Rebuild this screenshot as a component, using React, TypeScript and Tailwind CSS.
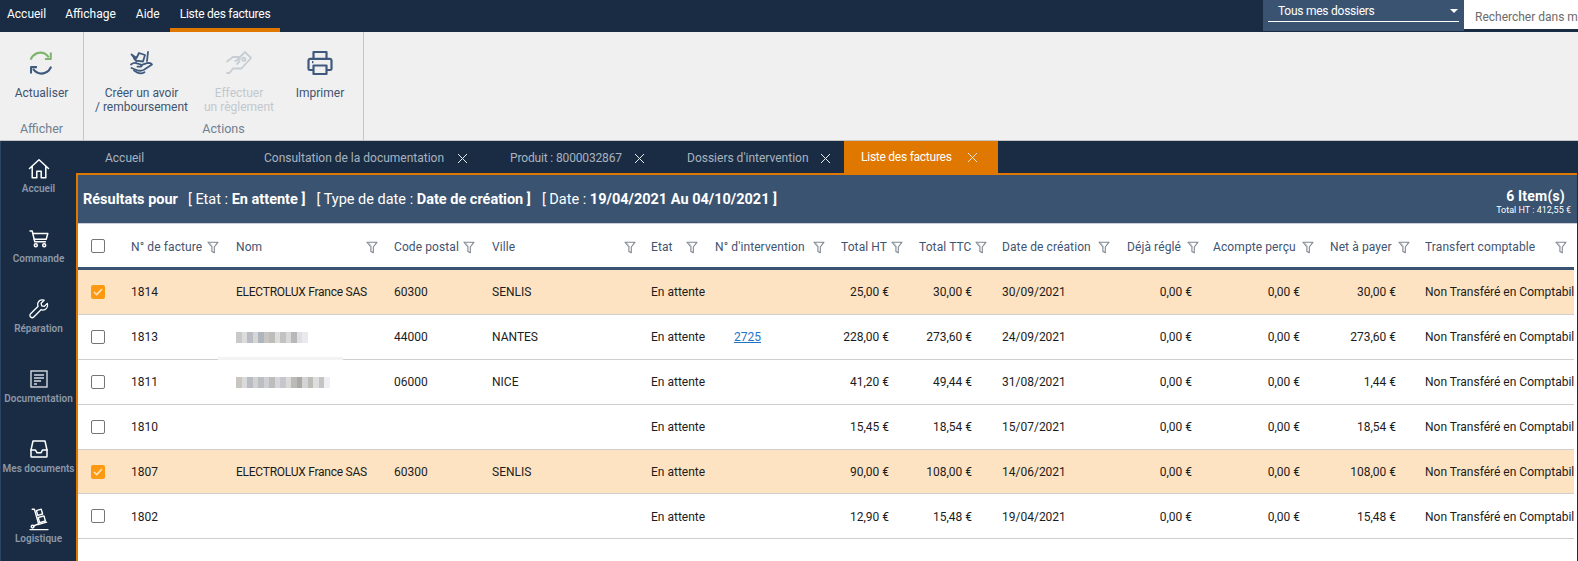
import React from "react";

const GRID = "grid grid-cols-[53px_105px_158px_98px_159px_64px_116px_78px_93px_115px_87px_116px_105px_149px]";

function Filter() {
  return (
    <svg width="12" height="13" viewBox="0 0 12 13" fill="none" stroke="#7f8791" strokeWidth="1.1" className="shrink-0">
      <path d="M1 1.2h10L7.3 6v5.8L4.9 10.4V6z" strokeLinejoin="round" />
      <path d="M2.6 1.8l3 4.2" stroke="#b4b9bf" />
    </svg>
  );
}

function Check({ on }: { on: boolean }) {
  if (on) {
    return (
      <div className="w-[14px] h-[14px] rounded-[2px] bg-[#fd9a12] flex items-center justify-center">
        <svg width="10" height="8" viewBox="0 0 10 8" fill="none" stroke="#fde6c6" strokeWidth="1.5">
          <path d="M1 4l2.7 2.6L9 1" />
        </svg>
      </div>
    );
  }
  return <div className="w-[14px] h-[14px] rounded-[2px] border-[1.5px] border-[#757575] bg-white" />;
}

const headers: { label: string; cls: string }[] = [
  { label: "N° de facture", cls: "pr-[17px]" },
  { label: "Nom", cls: "pr-[16px]" },
  { label: "Code postal", cls: "pr-[17px]" },
  { label: "Ville", cls: "pr-[15px]" },
  { label: "Etat", cls: "pr-[17px]" },
  { label: "N° d'intervention", cls: "pr-[6px]" },
  { label: "Total HT", cls: "pl-[10px] pr-[6px]" },
  { label: "Total TTC", cls: "pl-[10px] pr-[15px]" },
  { label: "Date de création", cls: "pr-[7px]" },
  { label: "Déjà réglé", cls: "pl-[10px] pr-[5px]" },
  { label: "Acompte perçu", cls: "pl-[9px] pr-[6px]" },
  { label: "Net à payer", cls: "pl-[10px] pr-[15px]" },
  { label: "Transfert comptable", cls: "pr-[7px]" },
];

type Row = {
  id: string;
  nom?: string;
  blur?: string[];
  patch?: boolean;
  cp: string;
  ville: string;
  interv?: string;
  ht: string;
  ttc: string;
  date: string;
  net: string;
  on?: boolean;
};

const B1 = ["#c9c9c9", "#dcdcdc", "#b9bcc2", "#d6d6d6", "#aeb6bd", "#c8c5c2", "#bfbdba", "#dedede", "#c2c2c2", "#d9d9d9", "#b8b8b8", "#dfe0e4", "#e9e9ee"];
const B2 = ["#c9c6c2", "#dadada", "#b9bcc2", "#d2d2d2", "#bbbfc4", "#cfcfd4", "#bdbdbd", "#d6d6dc", "#c6c6cc", "#dadada", "#bbbab8", "#aaa9a6", "#d4d4d4", "#bdbdb8", "#dedede", "#c4c4c4", "#f0f0f4"];

const rows: Row[] = [
  { id: "1814", nom: "ELECTROLUX France SAS", cp: "60300", ville: "SENLIS", ht: "25,00 €", ttc: "30,00 €", date: "30/09/2021", net: "30,00 €", on: true },
  { id: "1813", blur: B1, patch: true, cp: "44000", ville: "NANTES", interv: "2725", ht: "228,00 €", ttc: "273,60 €", date: "24/09/2021", net: "273,60 €" },
  { id: "1811", blur: B2, cp: "06000", ville: "NICE", ht: "41,20 €", ttc: "49,44 €", date: "31/08/2021", net: "1,44 €" },
  { id: "1810", cp: "", ville: "", ht: "15,45 €", ttc: "18,54 €", date: "15/07/2021", net: "18,54 €" },
  { id: "1807", nom: "ELECTROLUX France SAS", cp: "60300", ville: "SENLIS", ht: "90,00 €", ttc: "108,00 €", date: "14/06/2021", net: "108,00 €", on: true },
  { id: "1802", cp: "", ville: "", ht: "12,90 €", ttc: "15,48 €", date: "19/04/2021", net: "15,48 €" },
];

const iconProps = { fill: "none", stroke: "#ffffff", strokeWidth: 1.5, strokeLinecap: "round" as const, strokeLinejoin: "round" as const };

const sideItems: { label: string; icon: React.ReactNode }[] = [
  {
    label: "Accueil",
    icon: (
      <svg width="22" height="22" viewBox="0 0 22 22" {...iconProps}>
        <path d="M1.5 10.5L11 1.8l9.5 8.7M4.2 8.5v11.2h4.6v-6.4h4.4v6.4h4.6V8.5" />
      </svg>
    ),
  },
  {
    label: "Commande",
    icon: (
      <svg width="20" height="18" viewBox="0 0 20 18" {...iconProps}>
        <path d="M1 1h2.2l2.6 10.8h10.6" />
        <path d="M3.8 3.6h15l-1.6 5.6H5.2" />
        <circle cx="6.8" cy="15.2" r="1.5" />
        <circle cx="15.2" cy="15.2" r="1.5" />
      </svg>
    ),
  },
  {
    label: "Réparation",
    icon: (
      <svg width="20" height="20" viewBox="0 0 20 20" {...iconProps} strokeWidth={1.3}>
        <path d="M18.3 4.4l-3 3-2.6-.6-.6-2.6 3-3c-2.4-.8-5 .1-6 2.3-.6 1.3-.5 2.7 0 3.8L1.6 14.8c-.9.9-.9 2.4 0 3.2.9.9 2.3.9 3.2 0l7.2-7.3c1.2.5 2.6.5 3.8 0 2.2-1 3.2-3.8 2.5-6.3z" />
      </svg>
    ),
  },
  {
    label: "Documentation",
    icon: (
      <svg width="18" height="18" viewBox="0 0 18 18" fill="none" stroke="#d5d9df" strokeWidth="1.4">
        <rect x="1" y="1" width="16" height="16" />
        <path d="M4 5h10M4 8h10M4 11h7M4 14h3" strokeWidth="1.4" />
      </svg>
    ),
  },
  {
    label: "Mes documents",
    icon: (
      <svg width="18" height="18" viewBox="0 0 18 18" {...iconProps}>
        <path d="M3 1h12l2 9v6.2a.8.8 0 01-.8.8H1.8a.8.8 0 01-.8-.8V10z" />
        <path d="M1 10h4.5l1.5 2.8h4l1.5-2.8H17" />
      </svg>
    ),
  },
  {
    label: "Logistique",
    icon: (
      <svg width="20" height="23" viewBox="0 0 20 23" {...iconProps} strokeWidth={1.4}>
        <path d="M1 21.6h18" />
        <path d="M3.2 1.2h2.2l4.2 14.6L4.4 18" />
        <circle cx="3.6" cy="18.6" r="1.4" />
        <rect x="8" y="1.8" width="5" height="5" transform="rotate(-16 10.5 4.3)" />
        <rect x="9.8" y="8.6" width="6" height="5.4" transform="rotate(-16 12.8 11.3)" />
        <path d="M9 16.6l8.6-2.4" />
      </svg>
    ),
  },
];

function Money({ color }: { color: string }) {
  return (
    <svg width="26" height="26" viewBox="0 0 26 26" fill="none" stroke={color} strokeWidth="1.8" strokeLinecap="round" strokeLinejoin="round">
      <path d="M2.5 4.5l5 3.5 2.5-5 6 2-2 6.5-6.5-.8z" />
      <path d="M5 8.5l2.5 3" />
      <path d="M19 2l-1 9" />
      <path d="M2 14.5c2-1.6 4-2 6-1.2l3.8 1.2c1.4.4 1.2 2.2-.4 2.2H8.5" />
      <path d="M12 15.2l6-2c2-.6 4.5.2 5 1.4l-8 5.2c-2.6 1.4-5 1.2-7.5.2L2.5 18" />
      <path d="M5 20.5l3.5 2.2c2.5 1 5 .8 7-.4" />
    </svg>
  );
}

function Pay({ color }: { color: string }) {
  return (
    <svg width="28" height="26" viewBox="0 0 28 26" fill="none" stroke={color} strokeWidth="1.8" strokeLinecap="round" strokeLinejoin="round">
      <path d="M2 11.5l6-4.5h5.5c1.5 0 2 2 .5 2.6L10 11" />
      <path d="M13 9l7-7 6 6-9.5 10.5H8L4.5 23H2" />
      <circle cx="18.8" cy="9.2" r="1.6" />
      <path d="M12 14l2.5-2.5" />
    </svg>
  );
}

function Printer() {
  return (
    <svg width="26" height="26" viewBox="0 0 26 26" fill="none" stroke="#3f5a7c" strokeWidth="2.2" strokeLinejoin="round">
      <path d="M6.5 9V2h13v7" />
      <path d="M6.5 20H2.8A1.3 1.3 0 011.5 18.7v-8.4A1.6 1.6 0 013 8.8h20a1.6 1.6 0 011.5 1.5v8.4a1.3 1.3 0 01-1.3 1.3h-3.7" />
      <path d="M6.5 15.5h13V24h-13z" />
      <path d="M5 12.2h1.4" />
    </svg>
  );
}

function Refresh() {
  return (
    <svg width="24" height="26" viewBox="0 0 26 26" preserveAspectRatio="none" fill="none" strokeWidth="2.2" strokeLinejoin="round">
      <path d="M1.8 9.6C4.3 3.6 11.6 1 17 3.6c2 1 3.2 2.2 4.4 3.8" stroke="#7eb56f" />
      <path d="M23.6 2.6v6.4h-6.4" stroke="#7eb56f" />
      <path d="M24 16.6c-2.5 6-9.8 8.6-15.2 6-2-1-3.2-2.2-4.4-3.8" stroke="#3f5a7c" />
      <path d="M2.2 23.6v-6.4h6.4" stroke="#3f5a7c" />
    </svg>
  );
}

function RibbonBtn({ icon, lines, dim, cls }: { icon: React.ReactNode; lines: string[]; dim?: boolean; cls: string }) {
  return (
    <div className={`flex flex-col items-center ${cls}`}>
      <div className="h-[32px] flex items-center justify-center">{icon}</div>
      <div className={`mt-[7px] text-center text-[12px] leading-[14px] whitespace-nowrap ${dim ? "text-[#c2c8cf]" : "text-[#3f5470]"}`}>
        {lines.map((l) => (
          <div key={l}>{l}</div>
        ))}
      </div>
    </div>
  );
}

function Tab({ label, x, cls, xCls = "ml-[13px]" }: { label: string; x?: boolean; cls: string; xCls?: string }) {
  return (
    <div className={`flex items-center shrink-0 text-[12px] ${cls}`}>
      <span className="whitespace-nowrap">{label}</span>
      {x && (
        <svg width="11" height="11" viewBox="0 0 11 11" stroke="#e8ebee" strokeWidth="1" className={xCls}>
          <path d="M1 1l9 9M10 1l-9 9" />
        </svg>
      )}
    </div>
  );
}

function Cell({ children, cls = "" }: { children?: React.ReactNode; cls?: string }) {
  return <div className={`flex items-center min-w-0 whitespace-nowrap overflow-hidden pt-[1px] ${cls}`}>{children}</div>;
}

export default function App() {
  return (
    <div className="w-[1578px] h-[561px] overflow-hidden flex flex-col bg-[#1a2c44] font-['Roboto','Noto_Sans',sans-serif]">
      {/* Menu */}
      <div className="h-[32px] shrink-0 bg-[#1a2c44] flex items-start justify-between text-white text-[12px]">
        <div className="flex items-start h-full pl-[7px]">
          <div className="h-[28px] flex items-center">Accueil</div>
          <div className="h-[28px] flex items-center ml-[19px]">Affichage</div>
          <div className="h-[28px] flex items-center ml-[20px]">Aide</div>
          <div className="h-full ml-[10px] px-[10px] border-b-[4px] border-[#e07800] flex items-center tracking-[-0.25px]">Liste des factures</div>
        </div>
        <div className="flex items-start h-full">
          <div className="w-[201px] h-[31px] bg-[#3a5370] px-[5px]">
            <div className="h-[22px] border-b border-white flex items-center justify-between pl-[10px] pr-[1px]">
              <span className="tracking-[-0.25px]">Tous mes dossiers</span>
              <span className="w-0 h-0 border-l-[4px] border-r-[4px] border-t-[4px] border-l-transparent border-r-transparent border-t-white" />
            </div>
          </div>
          <div className="w-[114px] h-[29px] bg-white text-[#6b6b6b] pl-[11px] pt-[8px] overflow-hidden whitespace-nowrap text-[12px] leading-[18px]">
            Rechercher dans mes
          </div>
        </div>
      </div>

      {/* Ribbon */}
      <div className="h-[109px] shrink-0 bg-[#f0f0f0] border-b border-[#c4c4c4] flex">
        <div className="w-[84px] border-r border-[#c4c4c4] flex flex-col items-center">
          <RibbonBtn cls="mt-[15px] h-[63px]" icon={<Refresh />} lines={["Actualiser"]} />
          <div className="mt-[10px] text-[12.5px] text-[#6f8090]">Afficher</div>
        </div>
        <div className="w-[280px] border-r border-[#c4c4c4] flex flex-col">
          <div className="flex h-[79px] mt-[15px] pl-[10px]">
            <RibbonBtn cls="w-[95px]" icon={<Money color="#3f5a7c" />} lines={["Créer un avoir", "/ remboursement"]} />
            <RibbonBtn cls="w-[94px] ml-[3px]" dim icon={<Pay color="#c7cdd4" />} lines={["Effectuer", "un règlement"]} />
            <RibbonBtn cls="w-[60px] ml-[4px]" icon={<Printer />} lines={["Imprimer"]} />
          </div>
          <div className="text-center mt-[-6px] text-[12.5px] text-[#6f8090]">Actions</div>
        </div>
      </div>

      {/* Body */}
      <div className="flex-1 min-h-0 flex border-l border-[#2b4463]">
        {/* Sidebar */}
        <div className="w-[75px] shrink-0 flex flex-col items-center pt-[16px]">
          {sideItems.map((s) => (
            <div key={s.label} className="h-[70px] shrink-0 flex flex-col items-center w-full">
              <div className="h-[24px] flex items-center justify-center">{s.icon}</div>
              <div className="mt-[1px] text-[10px] leading-[14px] font-semibold text-[#8c98a8] whitespace-nowrap">{s.label}</div>
            </div>
          ))}
        </div>

        {/* Main */}
        <div className="flex-1 min-w-0 flex flex-col">
          <div className="h-[32px] shrink-0 flex items-stretch text-[#a9b3bf]">
            <Tab label="Accueil" cls="w-[188px] pl-[29px] pt-[2px]" />
            <Tab label="Consultation de la documentation" x cls="w-[246px] pt-[2px]" />
            <Tab label="Produit : 8000032867" x xCls="ml-[12px]" cls="w-[177px] pt-[2px] tracking-[-0.15px]" />
            <Tab label="Dossiers d'intervention" x xCls="ml-[11px]" cls="w-[157px] pt-[2px]" />
            <Tab label="Liste des factures" x xCls="ml-[15px]" cls="w-[154px] pl-[17px] bg-[#e07800] text-white tracking-[-0.25px]" />
          </div>

          <div className="flex-1 min-h-0 border-t-2 border-l-2 border-[#e07800] bg-white">
            {/* Results band */}
            <div className="h-[49px] bg-[#3a5370] border-b border-[#c9ced4] flex items-center justify-between pl-[5px] pr-[6px] text-white text-[14.5px]">
              <div className="whitespace-nowrap pt-[2px]">
                <b className="font-bold">Résultats pour</b>
                <span className="ml-[10px]">[ Etat : <b className="font-bold">En attente ]</b></span>
                <span className="ml-[11px]">[ Type de date : <b className="font-bold">Date de création ]</b></span>
                <span className="ml-[11px]">[ Date : <b className="font-bold">19/04/2021 Au 04/10/2021 ]</b></span>
              </div>
              <div className="text-right pt-[6px]">
                <div className="text-[14px] leading-[16px] font-bold pr-[6px] tracking-[0.2px]">6 Item(s)</div>
                <div className="text-[9px] leading-[12px]">Total HT : 412,55 €</div>
              </div>
            </div>

            {/* Header */}
            <div className={`${GRID} h-[43px] border-b-[3px] border-[#3a5370] box-content w-[1496px]`}>
              <div className="flex items-center pl-[13px] pt-[1px]"><Check on={false} /></div>
              {headers.map((h) => (
                <div key={h.label} className={`flex items-center justify-between pt-[3px] whitespace-nowrap overflow-hidden text-[12px] tracking-[0.1px] text-[#3f5470] ${h.cls}`}>
                  <span>{h.label}</span>
                  <Filter />
                </div>
              ))}
            </div>

            {/* Rows */}
            {rows.map((r) => (
              <div key={r.id} className={`${GRID} relative w-[1496px] h-[44.9px] border-b border-[#cfcfcf] text-[12px] text-[#1c1c1c] ${r.on ? "bg-[#fee3c2]" : "bg-white"}`}>
                <div className="flex items-center pl-[13px]"><Check on={!!r.on} /></div>
                <Cell>{r.id}</Cell>
                <Cell cls="tracking-[-0.25px]">
                  {r.nom}
                  {r.blur && (
                    <div className="flex">
                      {r.blur.map((c, i) => (
                        <div key={i} className="w-[5.5px] h-[11px]" style={{ backgroundColor: c }} />
                      ))}
                    </div>
                  )}
                </Cell>
                <Cell>{r.cp}</Cell>
                <Cell>{r.ville}</Cell>
                <Cell>En attente</Cell>
                <Cell cls="pl-[19px]">
                  {r.interv && <a className="text-[#1f74c9] underline">{r.interv}</a>}
                </Cell>
                <Cell cls="justify-end pr-[20px]">{r.ht}</Cell>
                <Cell cls="justify-end pr-[30px]">{r.ttc}</Cell>
                <Cell>{r.date}</Cell>
                <Cell cls="justify-end pr-[12px]">0,00 €</Cell>
                <Cell cls="justify-end pr-[20px]">0,00 €</Cell>
                <Cell cls="justify-end pr-[29px]">{r.net}</Cell>
                <Cell>Non Transféré en Comptabilité</Cell>
                {r.patch && <div className="absolute left-[140px] bottom-[-3px] w-[125px] h-[5px] bg-[#f3f3f3]" />}
              </div>
            ))}
          </div>
        </div>
        <div className="w-[1px]" />
      </div>
    </div>
  );
}
